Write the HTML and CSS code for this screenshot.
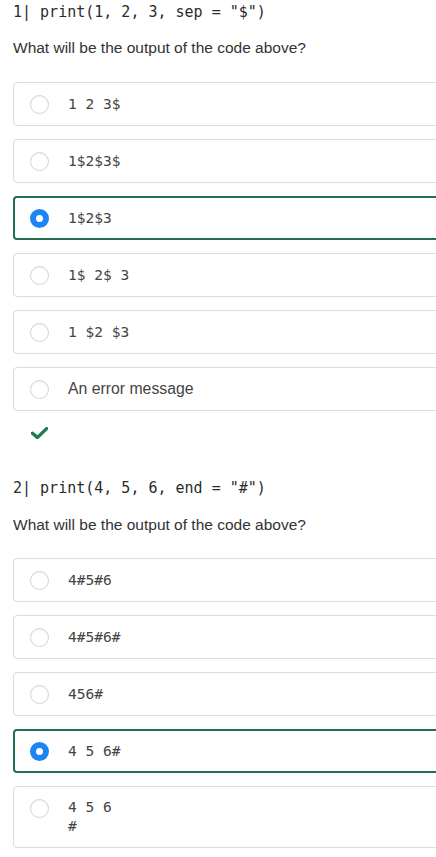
FILE: index.html
```html
<!DOCTYPE html>
<html>
<head>
<meta charset="utf-8">
<link rel="stylesheet" href="styles.css">
</head>
<body>
<section class="question">
  <div class="code">1| print(1, 2, 3, sep = "$")</div>
  <p class="prompt">What will be the output of the code above?</p>
  <ul class="options">
    <li class="option"><span class="radio"></span><span class="answer mono">1 2 3$</span></li>
    <li class="option"><span class="radio"></span><span class="answer mono">1$2$3$</span></li>
    <li class="option selected"><span class="radio"></span><span class="answer mono">1$2$3</span></li>
    <li class="option"><span class="radio"></span><span class="answer mono">1$ 2$ 3</span></li>
    <li class="option"><span class="radio"></span><span class="answer mono">1 $2 $3</span></li>
    <li class="option"><span class="radio"></span><span class="answer">An error message</span></li>
  </ul>
  <div class="feedback">
    <svg class="check" width="17" height="12" viewBox="0 0 17 12"><path d="M1.5 6.2 L6.3 10.6 L15.6 1.6" fill="none" stroke="#1f7a52" stroke-width="3.4" stroke-linecap="round" stroke-linejoin="round"/></svg>
  </div>
</section>
<section class="question second">
  <div class="code">2| print(4, 5, 6, end = "#")</div>
  <p class="prompt">What will be the output of the code above?</p>
  <ul class="options">
    <li class="option"><span class="radio"></span><span class="answer mono">4#5#6</span></li>
    <li class="option"><span class="radio"></span><span class="answer mono">4#5#6#</span></li>
    <li class="option"><span class="radio"></span><span class="answer mono">456#</span></li>
    <li class="option selected"><span class="radio"></span><span class="answer mono">4 5 6#</span></li>
    <li class="option"><span class="radio"></span><span class="answer mono multi">4 5 6<br>#</span></li>
  </ul>
</section>
</body>
</html>
```

FILE: styles.css
```css
html, body {
  margin: 0;
  padding: 0;
  background: #ffffff;
  overflow: hidden;
}
body {
  padding-left: 13px;
  font-family: "Liberation Sans", Arial, sans-serif;
  color: #333333;
}
.question {
  display: flex;
  flex-direction: column;
}
.second {
  margin-top: 37px;
}
.code {
  font-family: "DejaVu Sans Mono", monospace;
  font-size: 15px;
  line-height: 24px;
  color: #2b2b2b;
  white-space: pre;
}
.prompt {
  margin: 12px 0 0 0;
  font-size: 15.5px;
  line-height: 24px;
  color: #333333;
}
.second .prompt {
  margin-top: 13px;
}
.second .options {
  margin-top: 21px;
}
.options {
  list-style: none;
  margin: 22px -40px 0 0;
  padding: 0;
  display: flex;
  flex-direction: column;
  gap: 13px;
}
.option {
  box-sizing: border-box;
  display: flex;
  align-items: flex-start;
  gap: 19px;
  padding: 11px 16px;
  border: 1px solid #dcdcdc;
  border-radius: 4px;
  min-height: 44px;
}
.option.selected {
  border: 2px solid #22704d;
  padding: 10px 15px;
}
.radio {
  box-sizing: border-box;
  flex: none;
  width: 19px;
  height: 19px;
  margin-top: 0.5px;
  border-radius: 50%;
  border: 1px solid #d4d4d4;
  background: #ffffff;
  box-shadow: inset 0 1px 1px rgba(0, 0, 0, 0.06);
}
.selected .radio {
  border: 6px solid #1d84f5;
  background: #ffffff;
  box-shadow: none;
}
.answer {
  font-size: 15.8px;
  line-height: 20px;
  color: #444444;
  white-space: pre;
}
.answer.mono {
  font-family: "DejaVu Sans Mono", monospace;
  font-size: 14.5px;
}
.answer.multi {
  line-height: 19px;
}
.feedback {
  padding: 16px 0 0 18px;
  height: 12px;
}
.check {
  display: block;
}
```
